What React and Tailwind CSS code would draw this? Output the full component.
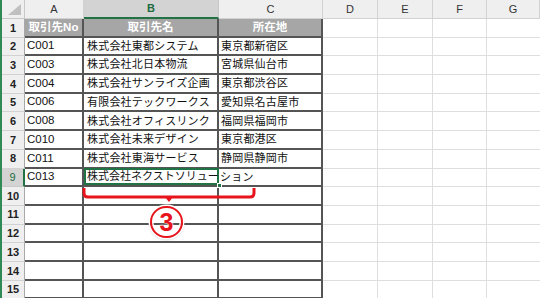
import React from "react"

const cols = [
  { key: "A", w: "w-[59px]" },
  { key: "B", w: "w-[135px]" },
  { key: "C", w: "w-[104px]" },
  { key: "D", w: "w-[55px]" },
  { key: "E", w: "w-[55px]" },
  { key: "F", w: "w-[54px]" },
  { key: "G", w: "flex-1" },
]

const rows = [
  ["C001", "株式会社東都システム", "東京都新宿区"],
  ["C003", "株式会社北日本物流", "宮城県仙台市"],
  ["C004", "株式会社サンライズ企画", "東京都渋谷区"],
  ["C006", "有限会社テックワークス", "愛知県名古屋市"],
  ["C008", "株式会社オフィスリンク", "福岡県福岡市"],
  ["C010", "株式会社未来デザイン", "東京都港区"],
  ["C011", "株式会社東海サービス", "静岡県静岡市"],
  ["C013", "株式会社ネクストソリュー", "ション"],
  ["", "", ""],
  ["", "", ""],
  ["", "", ""],
  ["", "", ""],
  ["", "", ""],
  ["", "", ""],
]

function ColHeader() {
  return (
    <div className="flex h-[19px]">
      <div className="w-[23px] shrink-0 bg-[#efefef] border-r border-b border-[#c8c8c8] flex items-end justify-end p-[3px]">
        <svg width="13" height="11" viewBox="0 0 13 11">
          <polygon points="13,0 13,11 0,11" fill="#c0c0c0" />
        </svg>
      </div>
      {cols.map(c => (
        c.key === "B" ? (
          <div key={c.key} className={`${c.w} shrink-0 bg-[#d3d3d3] border-r border-[#c8c8c8] border-b-2 border-b-[#217346] flex items-center justify-center text-[11px] text-[#1e6b40] font-bold`}>
            {c.key}
          </div>
        ) : (
          <div key={c.key} className={`${c.w} shrink-0 bg-[#efefef] border-r border-b border-[#d2d2d2] flex items-center justify-center text-[11px] text-[#333]`}>
            {c.key}
          </div>
        )
      ))}
    </div>
  )
}

function RowHeader({ n, selected }) {
  return selected ? (
    <div className="w-[23px] shrink-0 bg-[#d3d3d3] border-b border-[#c8c8c8] border-r-2 border-r-[#217346] flex items-center justify-center text-[11px] text-[#1e6b40]">
      {n}
    </div>
  ) : (
    <div className="w-[23px] shrink-0 bg-[#efefef] border-b border-[#d2d2d2] border-r border-r-[#a8a8a8] flex items-center justify-center text-[11px] text-[#222] font-bold">
      {n}
    </div>
  )
}

function EmptyCells() {
  return (
    <>
      <div className="w-[55px] shrink-0 border-r border-b border-[#dedede]" />
      <div className="w-[55px] shrink-0 border-r border-b border-[#dedede]" />
      <div className="w-[54px] shrink-0 border-r border-b border-[#dedede]" />
      <div className="flex-1 border-b border-[#dedede]" />
    </>
  )
}

export default function App() {
  return (
    <div className="relative w-[540px] h-[298px] overflow-hidden bg-white border-l-2 border-[#2f8a55] font-['Liberation_Sans','Noto_Sans_CJK_JP',sans-serif]">
      <ColHeader />

      {/* title row */}
      <div className="flex h-[18.7px]">
        <RowHeader n={1} />
        <div className="w-[59px] shrink-0 bg-[#a6a6a6] border-r-2 border-b-2 border-[#555] flex items-center justify-center text-white font-bold text-[11.5px]">取引先No</div>
        <div className="w-[135px] shrink-0 bg-[#a6a6a6] border-r-2 border-b-2 border-[#555] flex items-center justify-center text-white font-bold text-[11.5px]">取引先名</div>
        <div className="w-[104px] shrink-0 bg-[#a6a6a6] border-r-2 border-b-2 border-[#555] flex items-center justify-center text-white font-bold text-[11.5px]">所在地</div>
        <EmptyCells />
      </div>

      {rows.map((r, i) => {
        const n = i + 2
        const sel = n === 9
        return (
          <div key={n} className="flex h-[18.7px]">
            <RowHeader n={n} selected={sel} />
            <div className="w-[59px] shrink-0 border-r-2 border-b-2 border-[#555] flex items-center pl-[2px] text-[11.5px] text-[#111] whitespace-nowrap">{r[0]}</div>
            {sel ? (
              <div className="relative w-[135px] shrink-0 border-b-2 border-[#555]">
                <div className="absolute -top-[1px] left-0 right-0 bottom-0 border-2 border-[#217346] flex items-center pl-[1px] text-[11px] text-[#111] whitespace-nowrap">
                  {r[1]}
                </div>
                <div className="absolute -right-[3px] -bottom-[3px] w-[5px] h-[5px] bg-[#217346] border border-white z-20" />
              </div>
            ) : (
              <div className="w-[135px] shrink-0 border-r-2 border-b-2 border-[#555] flex items-center pl-[3px] text-[11px] tracking-[0.2px] text-[#111] whitespace-nowrap">{r[1]}</div>
            )}
            <div className={`w-[104px] shrink-0 border-r-2 border-b-2 border-[#555] flex items-center ${sel ? "pl-[1px]" : "pl-[2px]"} text-[11px] tracking-[0.2px] text-[#111] whitespace-nowrap`}>{r[2]}</div>
            <EmptyCells />
          </div>
        )
      })}

      {/* red bracket annotation */}
      <svg className="absolute left-0 top-0 pointer-events-none" width="540" height="298">
        <path d="M82 188 V193 Q82 197 86 197 H248 Q252 197 252 193 V188" fill="none" stroke="#e8141c" strokeWidth="3" />
        <path d="M163 197 L167 202 L171 197 Z" fill="#e8141c" />
      </svg>
      <div className="absolute left-[148px] top-[206px] w-[33px] h-[32px] rounded-full border-[2.5px] border-[#e8141c] shadow-[0_0_0_1.5px_white,inset_0_0_0_1.5px_white,0_1px_3px_rgba(0,0,0,0.35)] flex items-center justify-center">
        <span className="text-[25px] leading-none font-bold text-[#e8141c] [text-shadow:0_0_2px_white,0_0_2px_white] font-['Liberation_Sans',sans-serif]">3</span>
      </div>
    </div>
  )
}
